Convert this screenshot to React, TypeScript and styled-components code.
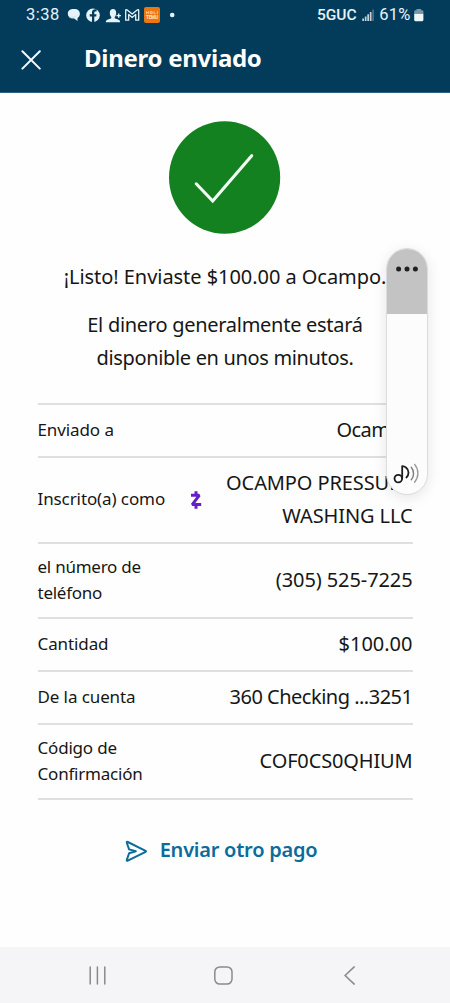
import React from "react";
import styled, { createGlobalStyle } from "styled-components";

const GlobalStyle = createGlobalStyle`
  * { box-sizing: border-box; }
  body { margin: 0; background: #fefefe; }
  svg { display: block; flex: none; }
`;

const Screen = styled.div`
  position: relative;
  display: flex;
  flex-direction: column;
  width: 450px;
  height: 1003px;
  background: #fefefe;
  color: #161616;
  font-family: "Noto Sans", sans-serif;
  overflow: hidden;
`;

const Header = styled.header`
  height: 93px;
  background: #033c5a;
  color: #fff;
  border-bottom: 1px solid #2d6284;
`;

const StatusBar = styled.div`
  display: flex;
  justify-content: space-between;
  height: 30px;
  padding: 0 26px 0 26px;
  color: #e6f3fa;
  font-family: Roboto, sans-serif;
`;

const StatusGroup = styled.div`
  display: flex;
  align-items: center;
  height: 30px;
`;

const StatusText = styled.span<{ $size: number; $weight?: number; $width: number; $spacing?: number }>`
  width: ${(p) => p.$width}px;
  font-size: ${(p) => p.$size}px;
  font-weight: ${(p) => p.$weight ?? 400};
  letter-spacing: ${(p) => p.$spacing ?? 0}px;
  line-height: 30px;
  white-space: nowrap;
`;

const TitleBar = styled.div`
  display: flex;
  align-items: center;
  height: 56px;
  padding: 0 0 1px 21px;
`;

const Title = styled.h1`
  margin: 0 0 0 43px;
  font-size: 24px;
  font-weight: 700;
  line-height: 34px;
  letter-spacing: -0.28px;
`;

const IconButton = styled.button`
  display: flex;
  margin-top: 4px;
  padding: 0;
  border: 0;
  background: none;
  color: inherit;
`;

const Content = styled.main`
  flex: 1;
  display: flex;
  flex-direction: column;
  align-items: center;
  padding: 28px 38px 0;
`;

const Message = styled.p<{ $top: number }>`
  margin: ${(p) => p.$top}px 0 0;
  font-size: 20px;
  line-height: 33px;
  text-align: center;
  white-space: nowrap;
`;

const Line = styled.span<{ $spacing: number }>`
  display: block;
  letter-spacing: ${(p) => p.$spacing}px;
`;

const Details = styled.dl`
  width: 375px;
  margin: 29px 0 0;
  border-top: 2px solid #dfdfdf;
`;

const DetailRow = styled.div<{ $height: number }>`
  display: flex;
  align-items: center;
  justify-content: space-between;
  height: ${(p) => p.$height}px;
  padding-bottom: 2px;
  border-bottom: 2px solid #dfdfdf;
`;

const Label = styled.dt<{ $spacing?: number }>`
  padding-top: 1px;
  font-size: 17px;
  line-height: 26.5px;
  letter-spacing: ${(p) => p.$spacing ?? -0.1}px;
  white-space: nowrap;
`;

const Value = styled.dd<{ $spacing?: number }>`
  flex: 1;
  margin: 0;
  padding-bottom: 1px;
  font-size: 20px;
  line-height: 33px;
  letter-spacing: ${(p) => p.$spacing ?? -0.1}px;
  text-align: right;
  white-space: nowrap;
`;

const Badge = styled.span`
  margin: 2px 0 0 25px;
`;

const PrimaryLink = styled.button`
  display: flex;
  align-items: center;
  gap: 12px;
  margin: 35px 0 0 -8px;
  padding: 0;
  border: 0;
  background: none;
  color: #0b6c9b;
  font: 600 20px/30px "Noto Sans", sans-serif;
  letter-spacing: -0.24px;
`;

const LinkIcon = styled.span`
  padding-top: 2px;
`;

const NavBar = styled.nav`
  display: grid;
  grid-template-columns: 126px 128px 14px;
  height: 56px;
  padding: 18px 0 0 87px;
  background: #f5f5f7;
`;

const VolumePanel = styled.div`
  position: absolute;
  left: 386px;
  top: 248px;
  display: flex;
  flex-direction: column;
  justify-content: space-between;
  width: 42px;
  height: 247px;
  border: 1px solid #dcdcdc;
  border-radius: 21px;
  background: #fcfcfc;
  box-shadow: 0 3px 14px rgba(0, 0, 0, 0.1);
  overflow: hidden;
`;

const VolumeEmpty = styled.div`
  display: flex;
  justify-content: center;
  height: 65px;
  padding-top: 16px;
  background: #c3c3c3;
`;

const VolumeIcon = styled.div`
  padding: 0 0 7px 6px;
`;

const StatusIcons = () => (
  <svg width="112" height="30" viewBox="66 0 112 30" fill="#e6f3fa">
    <path d="M72.300 9h2.600a4.900 4.900 0 0 1 5 4.700c0 2-1 3.200-2.400 4.200v3.100l-3.300-2.400h-1.600a4.800 4.800 0 0 1-4.800-4.600 4.600 4.600 0 0 1 4.500-5z" />
    <path d="M69 16.700c2.500 1.300 5.700.9 7.300-1" fill="none" stroke="#b9cfdb" strokeWidth=".6" />
    <circle cx="93" cy="15.200" r="6.800" />
    <path d="M92 22v-5.400h-2.300v-2.400H92v-1.700c0-2.100 1.300-3.200 3.100-3.200h1.500v2.200h-1.100c-.9 0-1.200.5-1.200 1.200v1.500h2.200l-.3 2.400h-1.900V22z" fill="#033c5a" />
    <path d="M113 9c2 0 3.200 1.600 3.200 4 0 1.800-.6 3.100-1.500 4v1.300l4 1.400c1.100.4 1.400 1.300 1.400 2.600h-14.300c0-1.300.4-2.200 1.500-2.600l4-1.400V17c-.9-.9-1.500-2.200-1.500-4 0-2.400 1.200-4 3.200-4z" />
    <path d="M118.700 13.400v4.400M116.500 15.600h4.400" stroke="#e6f3fa" strokeWidth="1.400" />
    <path d="M125.700 20.200V10.200q0-1 1.200-.4l5.300 4.300 5.300-4.300q1.200-.6 1.200.4v10h-3v-5.700l-3.500 2.900-3.500-2.900v5.700z" fill="none" stroke="#e6f3fa" strokeWidth="1.300" strokeLinejoin="round" />
    <rect x="144" y="7" width="16" height="16" rx="2" fill="#ee760f" />
    <path d="M146.500 11.400v2.400M148.600 11.400v2.400M146.500 12.600h2.100M150.300 11.600h1.900v2h-1.900zM154 11.400v2.300h1.500M157.300 11.400v2.400" stroke="#ffdcb8" strokeWidth=".8" fill="none" />
    <text x="152" y="18.700" fill="#ffe9d3" fontSize="4.600" fontWeight="700" fontFamily="Roboto, sans-serif" textAnchor="middle" textLength="12">TEMU</text>
    <circle cx="172.200" cy="15" r="2.300" />
  </svg>
);

const SignalIcon = () => (
  <svg width="13" height="30" viewBox="362 0 13 30" fill="#c3d4dd">
    <path d="M362.300 18.500h1.700V21h-1.700zM364.800 16.600h1.700V21h-1.700zM367.300 14.300h1.700V21h-1.700zM369.800 12h1.700v9h-1.700z" />
    <path d="M372.300 9.400h1.500V21h-1.500z" fill="#55788c" />
  </svg>
);

const BatteryIcon = () => (
  <svg width="10" height="30" viewBox="414 0 10 30">
    <path d="M416.500 9h4.600v1.200h.9a1.400 1.400 0 0 1 1.400 1.400v2.200h-9.200v-2.200a1.400 1.400 0 0 1 1.400-1.400h.9z" fill="#7897a7" />
    <path d="M414.200 13.800h9.200v6a1.500 1.500 0 0 1-1.500 1.500h-6.200a1.500 1.500 0 0 1-1.500-1.500z" fill="#eef6fa" />
  </svg>
);

const CloseIcon = () => (
  <svg width="20" height="20" viewBox="0 0 20 20" fill="none" stroke="#f4fafd" strokeWidth="2" strokeLinecap="round">
    <path d="M1.400 1.200 18.800 18.600M18.800 1.200 1.400 18.600" />
  </svg>
);

const SuccessIcon = () => (
  <svg width="112" height="113" viewBox="0 0 112 113">
    <ellipse cx="55.600" cy="56.500" rx="55.600" ry="56.300" fill="#148121" />
    <path d="M27.200 62.800 43.700 80 82.700 34.700" fill="none" stroke="#f2fff2" strokeWidth="3.100" strokeLinecap="round" />
  </svg>
);

const ZelleIcon = () => (
  <svg width="12" height="18" viewBox="0 0 12 18" fill="none" stroke="#6420c4">
    <path d="M6 .3v4M6 13.700v4" strokeWidth="3" />
    <path d="M1 4.300h8.300L2.200 13.600h9" strokeWidth="3" strokeLinejoin="bevel" />
  </svg>
);

const SendIcon = () => (
  <svg width="23" height="23" viewBox="0 0 23 23" fill="none" stroke="#0b6c9b" strokeWidth="2" strokeLinejoin="round" strokeLinecap="round">
    <path d="M1.800 2.700Q1.500 1.500 2.800 2L20.600 10.800Q21.300 11.300 20.600 11.800L2.800 20.700Q1.500 21.100 1.800 19.900L4.100 13.200 10.800 11.300 4.100 9.400Z" />
  </svg>
);

const MusicIcon = () => (
  <svg width="28" height="26" viewBox="0 0 28 26" fill="none" stroke="#1d1d1d" strokeWidth="1.800" strokeLinecap="round" strokeLinejoin="round">
    <circle cx="5.300" cy="17.600" r="3.800" />
    <path d="M9.200 17.600V5.200c2.300-.1 6.300 2 6.300 6.300 0 2.300-.9 3.900-2.100 5" />
    <path d="M18.300 6.300c3 3.500 3 8.900 0 12.400" stroke="#7c7c7c" strokeWidth="1.400" />
    <path d="M21.600 3.400c4.400 5.200 4.400 12.600 0 17.800" stroke="#999" strokeWidth="1.400" />
  </svg>
);

const MoreIcon = () => (
  <svg width="22" height="8" viewBox="0 0 22 8" fill="#202020">
    <circle cx="2.600" cy="4" r="2.500" />
    <circle cx="11" cy="4" r="2.500" />
    <circle cx="19.400" cy="4" r="2.500" />
  </svg>
);

const RecentsIcon = () => (
  <svg width="21" height="21" viewBox="0 0 21 21" stroke="#8a8a8c" strokeWidth="1.500" strokeLinecap="round">
    <path d="M3.200 2v17M10.400 2v17M17.800 2v17" />
  </svg>
);

const HomeIcon = () => (
  <svg width="21" height="21" viewBox="0 0 21 21" fill="none" stroke="#8a8a8c" strokeWidth="1.500">
    <rect x="1.800" y="1.900" width="17.200" height="17.200" rx="5" />
  </svg>
);

const BackIcon = () => (
  <svg width="14" height="21" viewBox="0 0 14 21" fill="none" stroke="#8a8a8c" strokeWidth="1.500" strokeLinecap="round">
    <path d="M13.200 1.900 4.100 10.500 13.200 19.100" />
  </svg>
);

export default function App() {
  return (
    <Screen>
      <GlobalStyle />
      <Header>
        <StatusBar>
          <StatusGroup>
            <StatusText $size={16.5} $width={40} $spacing={0.5}>3:38</StatusText>
            <StatusIcons />
          </StatusGroup>
          <StatusGroup>
            <StatusText $size={15.5} $weight={500} $width={45}>5GUC</StatusText>
            <SignalIcon />
            <StatusText $size={16.5} $width={39} $spacing={0.2}>&nbsp;61%</StatusText>
            <BatteryIcon />
          </StatusGroup>
        </StatusBar>
        <TitleBar>
          <IconButton aria-label="Cerrar">
            <CloseIcon />
          </IconButton>
          <Title>Dinero enviado</Title>
        </TitleBar>
      </Header>

      <Content>
        <SuccessIcon />
        <Message $top={26}>
          <Line $spacing={-0.05}>¡Listo! Enviaste $100.00 a Ocampo.</Line>
        </Message>
        <Message $top={15}>
          <Line $spacing={-0.28}>El dinero generalmente estará</Line>
          <Line $spacing={-0.34}>disponible en unos minutos.</Line>
        </Message>

        <Details>
          <DetailRow $height={53}>
            <Label>Enviado a</Label>
            <Value $spacing={-0.6}>Ocampo</Value>
          </DetailRow>
          <DetailRow $height={86}>
            <Label>Inscrito(a) como</Label>
            <Badge>
              <ZelleIcon />
            </Badge>
            <Value $spacing={-0.1}>
              OCAMPO PRESSURE
              <br />
              WASHING LLC
            </Value>
          </DetailRow>
          <DetailRow $height={75}>
            <Label $spacing={-0.25}>
              el número de
              <br />
              teléfono
            </Label>
            <Value>(305) 525-7225</Value>
          </DetailRow>
          <DetailRow $height={53}>
            <Label>Cantidad</Label>
            <Value $spacing={0}>$100.00</Value>
          </DetailRow>
          <DetailRow $height={53}>
            <Label>De la cuenta</Label>
            <Value $spacing={-0.5}>360 Checking ...3251</Value>
          </DetailRow>
          <DetailRow $height={75}>
            <Label $spacing={-0.2}>
              Código de
              <br />
              Confirmación
            </Label>
            <Value $spacing={-0.15}>COF0CS0QHIUM</Value>
          </DetailRow>
        </Details>

        <PrimaryLink>
          <LinkIcon>
            <SendIcon />
          </LinkIcon>
          Enviar otro pago
        </PrimaryLink>
      </Content>

      <NavBar>
        <RecentsIcon />
        <HomeIcon />
        <BackIcon />
      </NavBar>

      <VolumePanel>
        <VolumeEmpty>
          <MoreIcon />
        </VolumeEmpty>
        <VolumeIcon>
          <MusicIcon />
        </VolumeIcon>
      </VolumePanel>
    </Screen>
  );
}
